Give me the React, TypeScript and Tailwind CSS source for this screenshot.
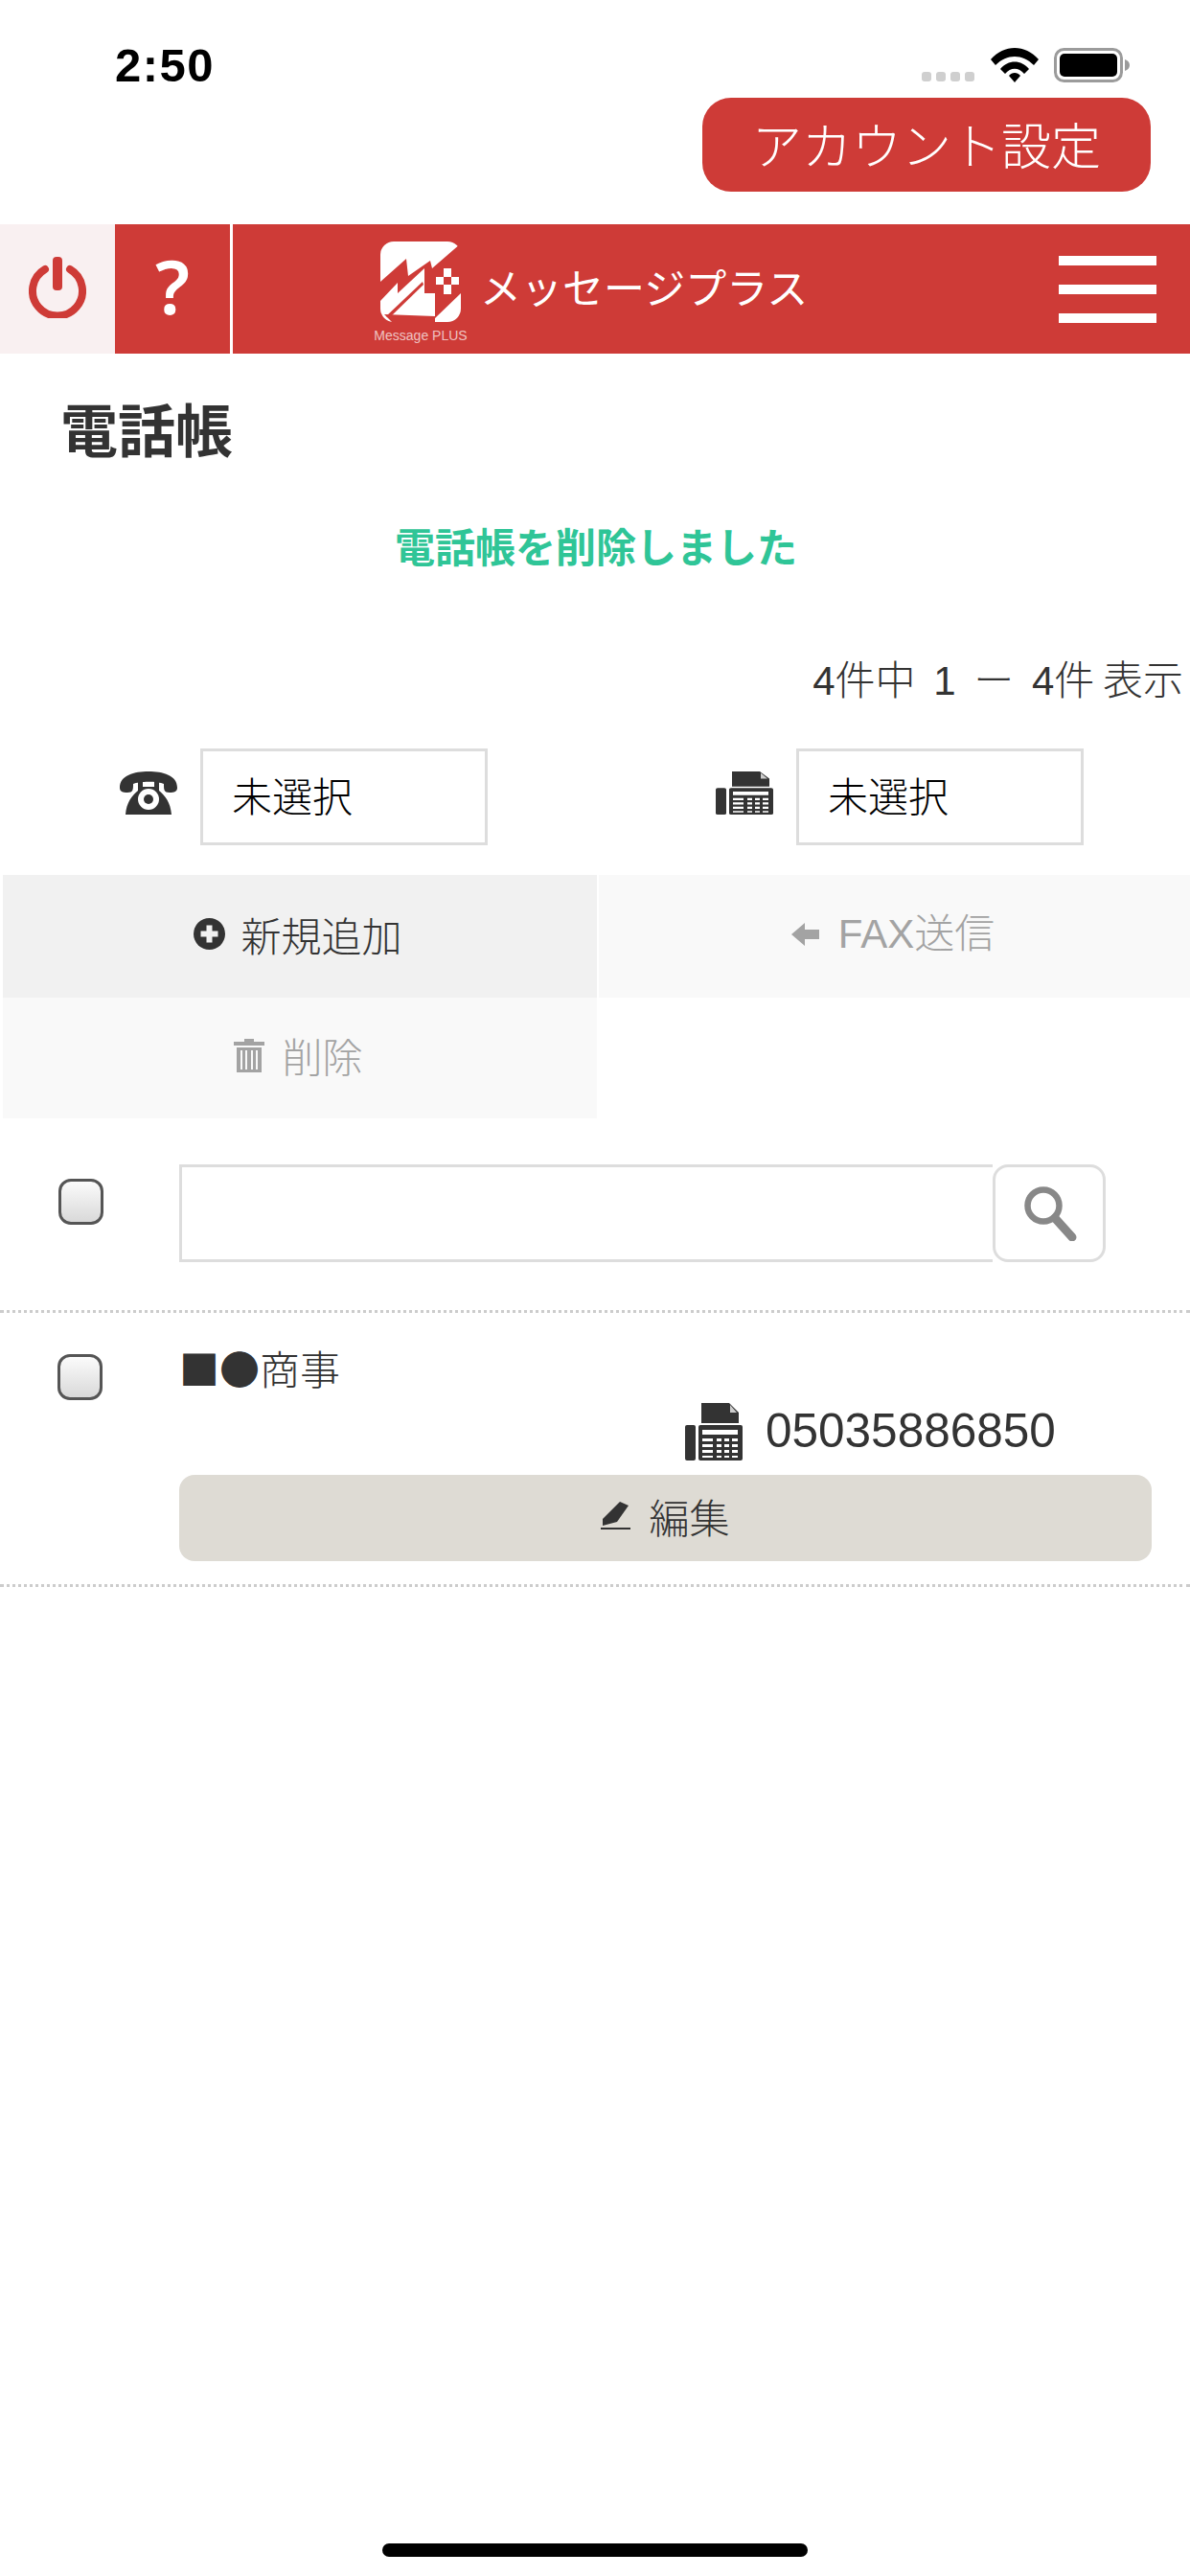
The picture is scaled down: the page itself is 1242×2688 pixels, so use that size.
import type { ReactNode } from 'react'

const RED = 'bg-[#ce3b37]'

function Signal() {
  return (
    <div className="flex gap-[5px] mt-[25px] mr-[17px]">
      <span className="w-[10px] h-[10px] rounded-[3px] bg-[#cfcfcf]" />
      <span className="w-[10px] h-[10px] rounded-[3px] bg-[#cfcfcf]" />
      <span className="w-[10px] h-[10px] rounded-[3px] bg-[#cfcfcf]" />
      <span className="w-[10px] h-[10px] rounded-[3px] bg-[#cfcfcf]" />
    </div>
  )
}

function Wifi() {
  return (
    <svg width="50" height="36" viewBox="0 0 50 36" className="mr-[16px]">
      <path d="M0 12 C14 -4 36 -4 50 12 L45 18 C33 6 17 6 5 18 Z" fill="#000" />
      <path d="M10 22 C18 12 32 12 40 22 L35 27 C29 20 21 20 15 27 Z" fill="#000" />
      <path d="M19 29 C22 25 28 25 31 29 L25 36 Z" fill="#000" />
    </svg>
  )
}

function Battery() {
  return (
    <svg width="80" height="36" viewBox="0 0 80 36">
      <rect x="1.5" y="1.5" width="69" height="33" rx="9" fill="none" stroke="#9b9b9b" strokeWidth="3" />
      <rect x="6" y="6" width="60" height="24" rx="5" fill="#000" />
      <path d="M74 12 C77 13 79 15 79 18 C79 21 77 23 74 24 Z" fill="#9b9b9b" />
    </svg>
  )
}

function Power() {
  return (
    <svg width="60" height="64" viewBox="0 0 60 64">
      <path d="M17 13 A26 26 0 1 0 43 13" fill="none" stroke="#ce3b37" strokeWidth="8" strokeLinecap="round" />
      <rect x="25" y="0" width="10" height="35" rx="4" fill="#ce3b37" />
    </svg>
  )
}

function Logo() {
  return (
    <svg width="84" height="84" viewBox="0 0 84 84">
      <rect x="0" y="0" width="84" height="84" rx="14" fill="#fff" />
      <path d="M84 2 L54 28 L52 20 L29 36 L27 18 L0 42 L0 62 L18 43 L18 54 L46 28 L46 54 L57 54 L57 80 L84 54 Z" fill="#ce3b37" />
      <path d="M4 76 L57 78 L57 84 L12 84 Z" fill="#ce3b37" />
      <path d="M6 78 L44 42 L45 45 L9 80 Z" fill="#ce3b37" />
      <path d="M58 37 h8 v-9 h8 v9 h8 v8 h-8 v10 h-8 v-10 h-8 z" fill="#fff" />
      <path d="M66 37 h8 v8 h-8 z" fill="#ce3b37" />
    </svg>
  )
}

function Phone() {
  return (
    <svg width="60" height="45" viewBox="0 0 60 45">
      <path d="M0 17 C0 4 15 0 30 0 C45 0 60 4 60 17 C60 21 57 22 52 22 C46 22 46 19 46 13 C40 10 20 10 14 13 C14 19 14 22 8 22 C3 22 0 21 0 17 Z" fill="#333" />
      <path d="M6 45 C7 32 13 25 19 20 L19 10 H24 V16 H36 V10 H41 V20 C47 25 53 32 54 45 Z" fill="#333" />
      <circle cx="30" cy="29" r="11" fill="#fff" />
      <circle cx="30" cy="29" r="5" fill="#333" />
    </svg>
  )
}

function Fax({ w, h }: { w: number; h: number }) {
  return (
    <svg width={w} height={h} viewBox="0 0 60 60" preserveAspectRatio="none">
      <path d="M17 0 H46 L56 10 V21 H17 Z" fill="#333" />
      <path d="M47 2 L54 10 H47 Z" fill="#ccc" />
      <rect x="0" y="23" width="11" height="37" rx="2" fill="#333" />
      <rect x="14" y="23" width="46" height="37" rx="2" fill="#333" />
      <rect x="18" y="28" width="37" height="5" fill="#fff" />
      <path d="M18 37 h11 v3 h-11 z M18 43 h11 v3 h-11 z M18 49 h11 v3 h-11 z M18 55 h11 v2 h-11 z" fill="#fff" />
      <path d="M33 37 h5 v3 h-5 z M41 37 h5 v3 h-5 z M49 37 h6 v3 h-6 z M33 43 h5 v3 h-5 z M41 43 h5 v3 h-5 z M49 43 h6 v3 h-6 z M33 49 h5 v3 h-5 z M41 49 h5 v3 h-5 z M49 49 h6 v3 h-6 z M33 55 h5 v2 h-5 z M41 55 h5 v2 h-5 z M49 55 h6 v2 h-6 z" fill="#fff" />
    </svg>
  )
}

function Plus() {
  return (
    <svg width="33" height="33" viewBox="0 0 33 33">
      <circle cx="16.5" cy="16.5" r="16.5" fill="#333" />
      <path d="M13.5 7.5 h6 v6 h6 v6 h-6 v6 h-6 v-6 h-6 v-6 h6 z" fill="#f1f1f1" />
    </svg>
  )
}

function ArrowLeft() {
  return (
    <svg width="29" height="24" viewBox="0 0 29 24">
      <path d="M0 12 L14 0 V7 H29 V17 H14 V24 Z" fill="#a3a3a3" />
    </svg>
  )
}

function Trash() {
  return (
    <svg width="32" height="36" viewBox="0 0 32 36">
      <path d="M0 4 H11 V1 H21 V4 H32 V8 H0 Z" fill="#a3a3a3" />
      <path d="M3 10 H29 V36 H3 Z" fill="#a3a3a3" />
      <path d="M7 13 h2 v20 h-2 z M12 13 h2 v20 h-2 z M18 13 h2 v20 h-2 z M23 13 h2 v20 h-2 z" fill="#f9f9f9" />
    </svg>
  )
}

function Search() {
  return (
    <svg width="56" height="57" viewBox="0 0 56 57">
      <circle cx="20" cy="20" r="16.5" fill="none" stroke="#888" strokeWidth="6.5" />
      <path d="M32 33 L50 53" stroke="#888" strokeWidth="9" strokeLinecap="round" />
    </svg>
  )
}

function Pen() {
  return (
    <svg width="32" height="30" viewBox="0 0 32 30">
      <path d="M20 0 L29 4 L17 21 L2 25 L2 18 Z" fill="#333" />
      <path d="M0 27 H31 V29 H0 Z" fill="#333" />
    </svg>
  )
}

function Checkbox() {
  return (
    <span className="block w-[47px] h-[48px] rounded-[13px] border-[3px] border-[#555] bg-gradient-to-b from-[#fbfbfb] to-[#d9d9d9]" />
  )
}

function Selector({ icon }: { icon: ReactNode }) {
  return (
    <div className="flex items-center w-[384px]">
      <span className="mb-[8px] w-[84px] flex">{icon}</span>
      <div className="w-[300px] h-[101px] border-[3px] border-[#dddddd] flex items-center pl-[30px] pb-[5px] text-[42px] text-black leading-none">
        未選択
      </div>
    </div>
  )
}

export default function App() {
  return (
    <div className="w-[1242px] h-[2688px] bg-white flex flex-col font-['Noto_Sans_CJK_JP',sans-serif] text-[#333] font-light">
      <div className="h-[102px] flex justify-between pl-[120px] pr-[62px] pt-[50px]">
        <span className="font-['Liberation_Sans',sans-serif] font-bold text-[49px] leading-[36px] tracking-[1.5px] text-black">2:50</span>
        <div className="flex items-start">
          <Signal />
          <Wifi />
          <Battery />
        </div>
      </div>

      <div className="h-[132px] flex justify-end pr-[41px]">
        <button className={`w-[468px] h-[98px] rounded-[30px] ${RED} text-white text-[52px] leading-none font-light pb-[3px]`}>
          アカウント設定
        </button>
      </div>

      <div className={`h-[135px] flex ${RED}`}>
        <div className="w-[120px] bg-[#f9f0f1] flex items-center justify-center pb-[4px]">
          <Power />
        </div>
        <div className="w-[120px] flex items-center justify-center pb-[8px] font-['Noto_Sans',sans-serif] font-semibold text-[78px] leading-none text-white">
          ?
        </div>
        <div className="w-[3px] bg-white" />
        <div className="flex-1 flex items-start pl-[147px] pt-[18px] relative">
          <div className="w-[98px] flex flex-col items-center">
            <Logo />
            <span className="mt-[6px] font-['Liberation_Sans',sans-serif] text-[14px] leading-[16px] text-white/70 whitespace-nowrap">Message PLUS</span>
          </div>
          <span className="ml-[13px] mt-[21px] text-[43px] leading-[50px] font-normal text-white whitespace-nowrap">メッセージプラス</span>
          <div className="absolute right-[35px] top-[33px] w-[102px] flex flex-col gap-[20px]">
            <span className="h-[10px] bg-white" />
            <span className="h-[10px] bg-white" />
            <span className="h-[10px] bg-white" />
          </div>
        </div>
      </div>

      <h1 className="h-[160px] flex items-center pl-[63px] pb-[6px] text-[60px] font-bold leading-none">電話帳</h1>
      <p className="h-[82px] flex items-center justify-center pl-[2px] pb-[3px] text-[42px] font-bold text-[#2fc597] leading-none">
        電話帳を削除しました
      </p>
      <p className="mt-[80px] h-[40px] flex items-center justify-end pr-[7px] text-[42px] leading-none whitespace-pre font-['Liberation_Sans','Noto_Sans_CJK_JP',sans-serif] [word-spacing:7px]">
        <span>
          4件中 1 ー 4件<span className="ml-[-10px]"> 表示</span>
        </span>
      </p>

      <div className="mt-[50px] flex pl-[125px]">
        <Selector icon={<Phone />} />
        <div className="ml-[238px]">
          <Selector icon={<Fax w={60} h={45} />} />
        </div>
      </div>

      <div className="mt-[31px] grid grid-cols-[620px_617px] gap-x-[2px] pl-[3px] text-[42px] leading-none">
        <button className="h-[128px] bg-[#f1f1f1] flex items-center justify-center gap-[16px] pr-[4px] pb-[5px] font-light">
          <Plus />
          新規追加
        </button>
        <button className="h-[128px] bg-[#f9f9f9] text-[#a3a3a3] flex items-center justify-center gap-[20px] pr-[3px] pb-[4px] font-['Liberation_Sans','Noto_Sans_CJK_JP',sans-serif] font-light">
          <ArrowLeft />
          FAX送信
        </button>
        <button className="h-[126px] bg-[#f9f9f9] text-[#a3a3a3] flex items-center justify-center gap-[18px] pr-[3px] pb-[7px] font-light">
          <Trash />
          削除
        </button>
      </div>

      <div className="mt-[48px] flex items-start pl-[61px]">
        <div className="mt-[15px] w-[126px]">
          <Checkbox />
        </div>
        <div className="w-[849px] h-[102px] border-[3px] border-r-0 border-[#dddddd]" />
        <button className="w-[118px] h-[102px] border-[3px] border-[#dddddd] rounded-[16px] flex items-center justify-center pl-[4px]">
          <Search />
        </button>
      </div>

      <div className="mt-[50px] border-t-[3px] border-dotted border-[#cccccc]" />

      <div className="flex items-start pl-[60px] pt-[38px] pr-[40px] pb-[24px] border-b-[3px] border-dotted border-[#cccccc]">
        <div className="mt-[5px] w-[127px] shrink-0">
          <Checkbox />
        </div>
        <div className="flex-1">
          <p className="h-[38px] flex items-center text-[42px] leading-none">■●商事</p>
          <div className="mt-[18px] h-[60px] flex items-start pl-[528px]">
            <Fax w={60} h={60} />
            <span className="ml-[24px] mt-[9px] text-[49.5px] leading-[40px] font-['Liberation_Sans',sans-serif]">05035886850</span>
          </div>
          <button className="mt-[15px] w-full h-[90px] bg-[#dedbd4] rounded-[16px] flex items-center justify-center gap-[18px] pb-[4px] text-[42px] leading-none font-light">
            <Pen />
            編集
          </button>
        </div>
      </div>

      <div className="mt-auto mb-[20px] mx-auto w-[444px] h-[14px] rounded-full bg-black" />
    </div>
  )
}
